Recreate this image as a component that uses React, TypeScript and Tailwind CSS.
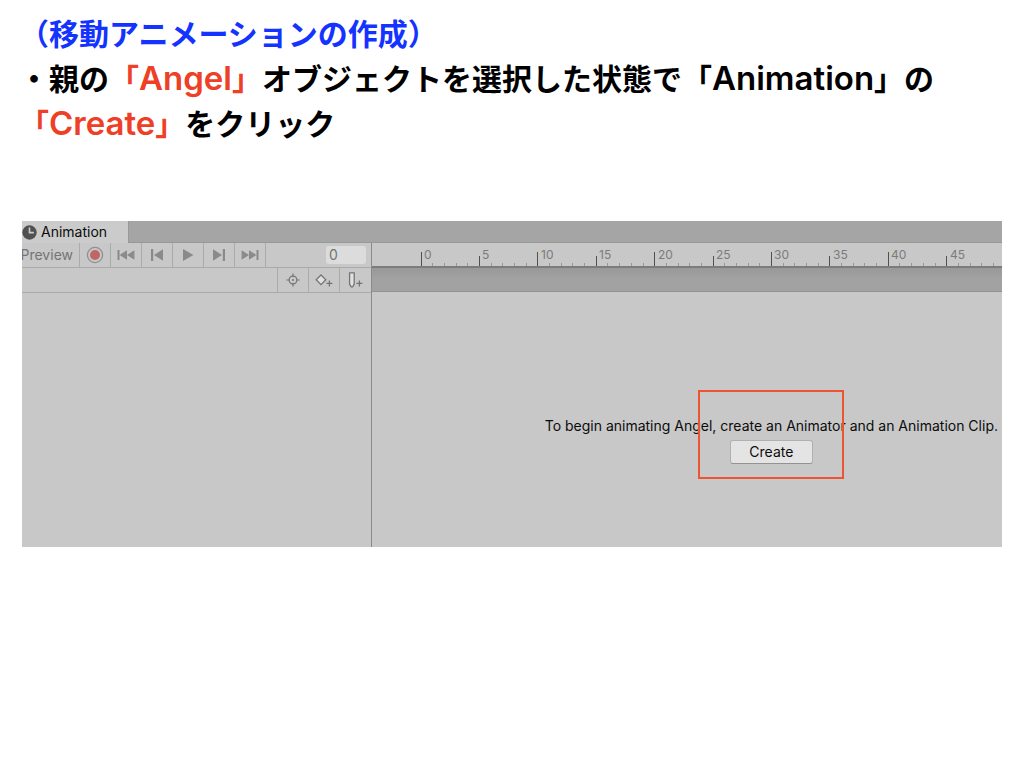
import React from "react";
import { ReactNode } from "react";

const FRAME_WIDTH = 11.68;
const RULER_START = 49;
const frames = Array.from({ length: 50 }, (_, i) => i);

const TOOL_BUTTON =
  "flex h-full w-[31px] shrink-0 items-center justify-center border-l border-[#ababab]";

type ToolButtonProps = {
  label: string;
  children: ReactNode;
};

function ToolButton({ label, children }: ToolButtonProps) {
  return (
    <button type="button" aria-label={label} className={TOOL_BUTTON}>
      {children}
    </button>
  );
}

function Latin({ children }: { children: ReactNode }) {
  return (
    <span className="font-['Inter',sans-serif] text-[33px] leading-none font-semibold">
      {children}
    </span>
  );
}

function ClockIcon() {
  return (
    <svg width="15" height="15" viewBox="0 0 15 15">
      <circle cx="7.5" cy="7.5" r="7.2" fill="#505050" />
      <path d="M7.5 2.6v5h4.4" fill="none" stroke="#cbcbcb" strokeWidth="1.6" />
    </svg>
  );
}

function RecordIcon() {
  return (
    <svg width="18" height="18" viewBox="0 0 18 18">
      <circle cx="9" cy="9" r="7.6" fill="none" stroke="#909090" strokeWidth="1.3" />
      <circle cx="9" cy="9" r="5" fill="#bf6767" />
    </svg>
  );
}

function FirstIcon() {
  return (
    <svg width="18" height="12" viewBox="0 0 18 12" fill="#8a8a8a">
      <path d="M0.5 1h2v10h-2zM10 1.2v9.6L2.6 6zM17.4 1.2v9.6L10 6z" />
    </svg>
  );
}

function PrevIcon() {
  return (
    <svg width="14" height="14" viewBox="0 0 14 14" fill="#8a8a8a">
      <path d="M1 1h2.2v12H1zM13 1.2v11.6L4 7z" />
    </svg>
  );
}

function PlayIcon() {
  return (
    <svg width="12" height="14" viewBox="0 0 12 14" fill="#8a8a8a">
      <path d="M1 1l10.4 6L1 13z" />
    </svg>
  );
}

function NextIcon() {
  return (
    <svg width="14" height="14" viewBox="0 0 14 14" fill="#8a8a8a">
      <path d="M10.8 1H13v12h-2.2zM1 1.2v11.6L10 7z" />
    </svg>
  );
}

function LastIcon() {
  return (
    <svg width="18" height="12" viewBox="0 0 18 12" fill="#8a8a8a">
      <path d="M15.5 1h2v10h-2zM0.6 1.2v9.6L8 6zM8 1.2v9.6L15.4 6z" />
    </svg>
  );
}

function TargetIcon() {
  return (
    <svg width="14" height="14" viewBox="0 0 14 14" fill="none" stroke="#747474" strokeWidth="1.2">
      <circle cx="7" cy="7" r="3.9" />
      <path d="M7 0.4v3M7 10.6v3M0.4 7h3M10.6 7h3" />
      <circle cx="7" cy="7" r="1" fill="#747474" stroke="none" />
    </svg>
  );
}

function AddKeyIcon() {
  return (
    <svg width="18" height="16" viewBox="0 0 18 16" stroke="#747474" strokeWidth="1.3">
      <path d="M6 3l4.8 4.8L6 12.6 1.2 7.8z" fill="#e2e2e2" />
      <path d="M14.4 8.4v6M11.4 11.4h6" />
    </svg>
  );
}

function AddEventIcon() {
  return (
    <svg width="16" height="16" viewBox="0 0 16 16" stroke="#747474" strokeWidth="1.3">
      <path d="M2.6 0.8h4.6v11.4l-1.6 2.6H4.2l-1.600-2.600z" fill="#e2e2e2" />
      <path d="M12.4 8.4v6M9.4 11.4h6" />
    </svg>
  );
}

function Ruler() {
  return (
    <div className="relative h-[25px] overflow-hidden border-b-2 border-[#7c7c7c] bg-[#c8c8c8]">
      <svg className="absolute inset-0 h-full w-full">
        {frames.map((frame) => {
          const x = Math.round(RULER_START + frame * FRAME_WIDTH - 0.4);
          const top = frame % 10 === 0 ? 9 : frame % 5 === 0 ? 13 : 20;
          return (
            <rect
              key={frame}
              x={x}
              y={top}
              width={1}
              height={24 - top}
              fill={frame % 5 === 0 ? "#505050" : "#979797"}
            />
          );
        })}
      </svg>
      {frames
        .filter((frame) => frame % 5 === 0)
        .map((frame) => (
          <span
            key={frame}
            className="absolute top-1 text-xs leading-4 text-[#7b7b7b]"
            style={{ left: Math.round(RULER_START + frame * FRAME_WIDTH) + 3 }}
          >
            {frame}
          </span>
        ))}
    </div>
  );
}

function AnimationWindow() {
  return (
    <section className="overflow-hidden bg-[#c8c8c8] font-['Inter',sans-serif] text-sm text-[#0c0c0c]">
      <div className="flex h-[22px] bg-[#a5a5a5]">
        <div className="flex w-[107px] items-center gap-1 border-r border-[#999999] bg-[#cbcbcb]">
          <ClockIcon />
          <span>Animation</span>
        </div>
        <div className="flex-1 border-b border-[#989898]" />
      </div>

      <div className="flex h-[304px]">
        <div className="flex w-[350px] shrink-0 flex-col border-r border-[#8a8a8a]">
          <div className="flex h-[25px] items-center border-b border-[#ababab]">
            <button
              type="button"
              className="flex h-full w-[57px] items-center justify-end pr-1.5 text-[#747474]"
            >
              Preview
            </button>
            <ToolButton label="Record">
              <RecordIcon />
            </ToolButton>
            <ToolButton label="First frame">
              <FirstIcon />
            </ToolButton>
            <ToolButton label="Previous key">
              <PrevIcon />
            </ToolButton>
            <ToolButton label="Play">
              <PlayIcon />
            </ToolButton>
            <ToolButton label="Next key">
              <NextIcon />
            </ToolButton>
            <ToolButton label="Last frame">
              <LastIcon />
            </ToolButton>
            <div className="flex h-full flex-1 items-center justify-end border-l border-[#ababab] pr-[5px]">
              <input
                aria-label="Frame"
                defaultValue="0"
                className="h-[18px] w-10 rounded-[3px] bg-[#dcdcdc] px-[3px] text-[#747474]"
              />
            </div>
          </div>
          <div className="flex h-[25px] justify-end border-b border-[#ababab] pr-px">
            <ToolButton label="Filter by selection">
              <TargetIcon />
            </ToolButton>
            <ToolButton label="Add keyframe">
              <AddKeyIcon />
            </ToolButton>
            <ToolButton label="Add event">
              <AddEventIcon />
            </ToolButton>
          </div>
        </div>

        <div className="flex min-w-0 flex-1 flex-col">
          <Ruler />
          <div className="h-6 border-b border-[#929292] bg-linear-to-b from-[#999999] to-[#a2a2a2] to-50%" />
          <div className="flex flex-1 flex-col items-end pt-[124px] pr-1">
            <div className="relative flex flex-col items-center gap-1">
              <p className="leading-5 whitespace-nowrap">
                To begin animating Angel, create an Animator and an Animation Clip.
              </p>
              <button
                type="button"
                className="h-6 w-[83px] rounded-[3px] border border-[#b0b0b0] border-b-[#939393] bg-[#e4e4e4]"
              >
                Create
              </button>
              <div className="pointer-events-none absolute -top-[26px] left-1/2 h-[89px] w-[146px] -translate-x-1/2 border-2 border-[#ee5432]" />
            </div>
          </div>
        </div>
      </div>
    </section>
  );
}

export default function App() {
  return (
    <main className="min-h-screen bg-white px-[22px] pt-2.5">
      <h1 className="-ml-[3px] font-['Noto_Sans_CJK_JP',sans-serif] text-[30px] leading-[45px] font-bold text-black">
        <span className="block text-[#1433ff]">（移動アニメーションの作成）</span>
        <span className="block">
          ・親の
          <span className="text-[#ee4026]">
            「<Latin>Angel</Latin>」
          </span>
          オブジェクトを選択した状態で「<Latin>Animation</Latin>」の
        </span>
        <span className="block">
          <span className="text-[#ee4026]">
            「<Latin>Create</Latin>」
          </span>
          をクリック
        </span>
      </h1>
      <div className="mt-[76px]">
        <AnimationWindow />
      </div>
    </main>
  );
}
